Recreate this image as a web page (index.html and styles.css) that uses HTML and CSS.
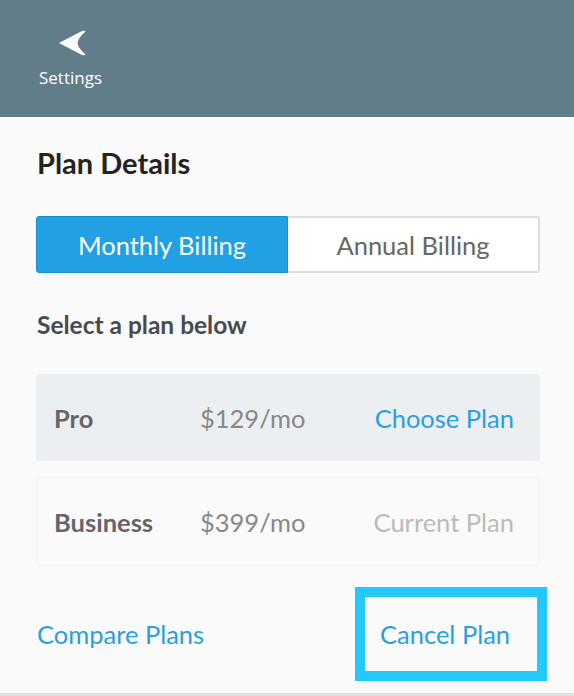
FILE: index.html
```html
<!DOCTYPE html>
<html>
<head>
<meta charset="utf-8">
<link rel="stylesheet" href="styles.css">
</head>
<body>
<header class="topbar">
  <a class="back">
    <svg class="back-icon" width="28" height="26" viewBox="0 0 28 26">
      <path d="M1 13 L24 1 Q27 0.5 27.5 1.5 Q20 8 19.5 13 Q20 18 27.5 24.5 Q27 25.5 24 25 Z" fill="#fff"/>
    </svg>
    <span class="back-label">Settings</span>
  </a>
</header>
<main class="content">
  <h1 class="title">Plan Details</h1>
  <div class="toggle">
    <div class="seg seg-active">Monthly Billing</div>
    <div class="seg seg-inactive">Annual Billing</div>
  </div>
  <h2 class="subtitle">Select a plan below</h2>
  <div class="plans">
    <div class="plan plan-pro">
      <span class="plan-name">Pro</span>
      <span class="plan-price">$129/mo</span>
      <span class="plan-action action-choose">Choose Plan</span>
    </div>
    <div class="plan plan-business">
      <span class="plan-name">Business</span>
      <span class="plan-price">$399/mo</span>
      <span class="plan-action action-current">Current Plan</span>
    </div>
  </div>
  <div class="footer-links">
    <span class="link">Compare Plans</span>
    <span class="link cancel-box"><span class="cancel-text">Cancel Plan</span></span>
  </div>
</main>
<div class="bottom-line"></div>
</body>
</html>
```
FILE: styles.css
```css
html, body {
  margin: 0;
  padding: 0;
}
body {
  width: 574px;
  height: 696px;
  background: #fafafa;
  font-family: Lato, "Open Sans", sans-serif;
  overflow: hidden;
  display: flex;
  flex-direction: column;
}
.topbar {
  height: 117px;
  background: #627d8a;
  flex: none;
  display: flex;
}
.back {
  display: flex;
  flex-direction: column;
  align-items: center;
  padding-left: 39px;
  padding-top: 30px;
}
.back-icon {
  display: block;
  margin-left: 2px;
}
.back-label {
  font-family: "Open Sans", sans-serif;
  font-size: 17px;
  color: #fff;
  margin-top: 11px;
  line-height: 22px;
}
.content {
  flex: 1;
  padding: 0 34px 0 36px;
  display: flex;
  flex-direction: column;
}
.title {
  font-size: 29px;
  font-weight: 700;
  color: #232323;
  margin: 29px 0 0 1px;
  line-height: 34px;
}
.toggle {
  display: flex;
  margin-top: 36px;
  height: 57px;
}
.seg {
  flex: 1;
  display: flex;
  align-items: center;
  justify-content: center;
  font-size: 25.5px;
  box-sizing: border-box;
}
.seg-active {
  background: #22a0e4;
  color: #fff;
  border: 1px solid #1a8fcc;
  border-radius: 3px 0 0 3px;
}
.seg-inactive {
  background: #fff;
  color: #666;
  border: 2px solid #dedede;
  border-left: none;
  border-radius: 0 3px 3px 0;
}
.subtitle {
  font-size: 24.5px;
  font-weight: 700;
  color: #464b50;
  margin: 37px 0 0 1px;
  line-height: 30px;
}
.plans {
  margin-top: 34px;
  display: flex;
  flex-direction: column;
  gap: 16px;
}
.plan {
  height: 87px;
  display: flex;
  align-items: center;
  padding: 0 26px 0 18px;
  border-radius: 3px;
  font-size: 25.5px;
  box-sizing: border-box;
}
.plan-pro {
  background: #eceff2;
}
.plan-business {
  height: 89px;
  background: #fafafa;
  border: 1px solid #f3f3f3;
  padding-left: 17px;
  padding-right: 25px;
}
.plan-name {
  width: 146px;
  font-weight: 700;
  color: #666;
}
.plan-price {
  flex: 1;
  color: #888;
}
.action-choose {
  color: #2a9fe0;
}
.action-current {
  color: #bbb;
}
.footer-links {
  display: flex;
  justify-content: space-between;
  align-items: center;
  margin-top: 21px;
  padding-left: 1px;
  margin-right: -7px;
}
.link {
  font-size: 25.5px;
  color: #2a9fe0;
}
.cancel-box {
  width: 192px;
  height: 94px;
  box-sizing: border-box;
  border: 10px solid #24c9fa;
  display: flex;
  align-items: center;
  padding-left: 15px;
}
.bottom-line {
  height: 3px;
  background: #e0e0e0;
  flex: none;
}
```
